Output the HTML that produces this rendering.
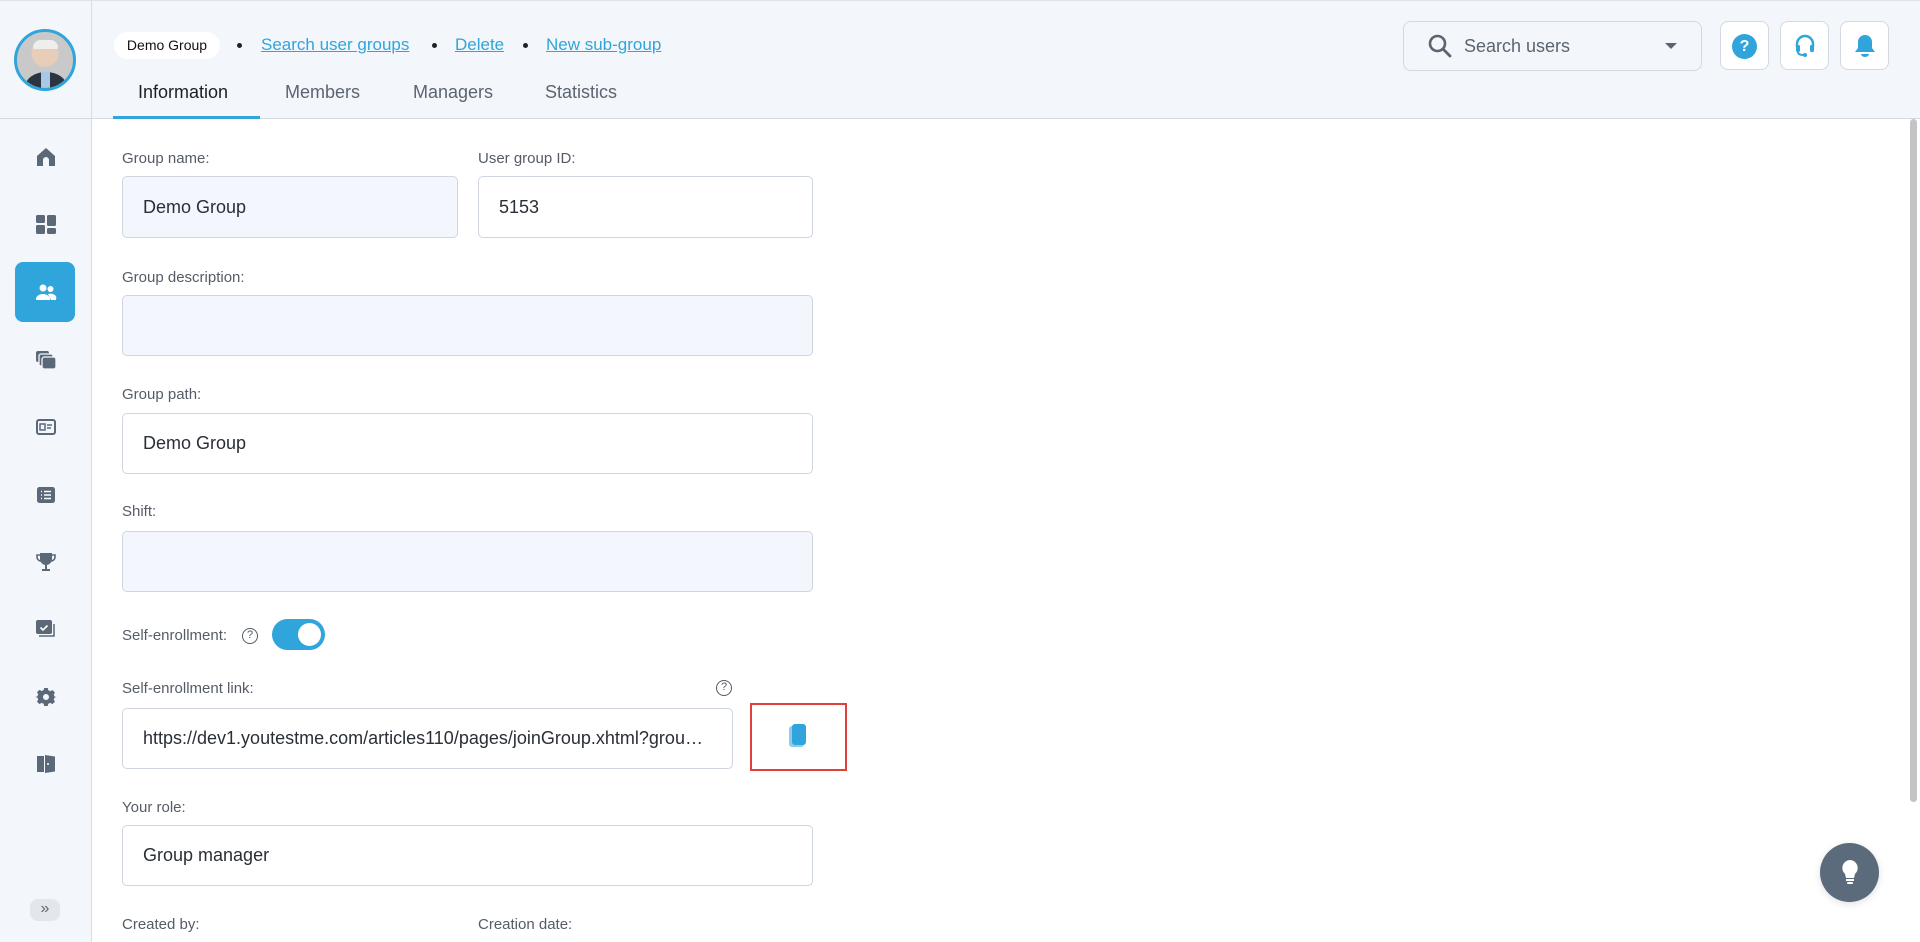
<!DOCTYPE html>
<html><head><meta charset="utf-8"><style>
*{box-sizing:border-box;margin:0;padding:0}
body{width:1920px;height:942px;overflow:hidden;background:#fff;font-family:"Liberation Sans",sans-serif;position:relative;color:#222}
.abs{position:absolute}
#side{left:0;top:0;width:92px;height:942px;background:#f3f7fc;border-right:1px solid #d8dee6}
#head{left:92px;top:0;width:1828px;height:119px;background:#f3f7fc;border-bottom:1px solid #d3d9e1;border-top:1px solid #dde3ea}
.sideTop{left:0;top:0;width:92px;height:119px;border-bottom:1px solid #d3d9e1;border-top:1px solid #dde3ea}
.ic{position:absolute;left:34px;width:24px;height:24px}
.lbl{position:absolute;font-size:15px;color:#555c66}
.inp{position:absolute;border:1px solid #cfd6df;border-radius:5px;font-size:18px;color:#2a2f36;padding-left:20px;display:flex;align-items:center}
.gray{background:#f3f6fc}
.link{position:absolute;top:35px;font-size:17px;color:#2fa5dc;text-decoration:underline}
.dot{position:absolute;top:43px;width:5px;height:5px;border-radius:50%;background:#222}
.tab{position:absolute;top:82px;font-size:18px;color:#5b6470}
.btn{position:absolute;top:21px;width:49px;height:49px;border:1px solid #d3d9e1;border-radius:8px;background:#fff}
.q{position:absolute;width:16px;height:16px;border:1.5px solid #555c66;border-radius:50%;font-size:11px;text-align:center;line-height:13px;color:#555c66}
</style></head><body>
<div id="side" class="abs"></div>
<div class="abs sideTop"></div>
<div id="head" class="abs"></div>
<!-- avatar -->
<div class="abs" style="left:14px;top:29px;width:62px;height:62px;border-radius:50%;border:3px solid #2fa5dc;background:radial-gradient(circle at 50% 38%,#e8cdb9 0 13px,#c9c9c9 14px 100%);overflow:hidden">
<div style="position:absolute;left:8px;top:40px;width:42px;height:30px;border-radius:50% 50% 0 0;background:#2c3442"></div>
<div style="position:absolute;left:24px;top:40px;width:9px;height:20px;background:#a9c8e8"></div>
<div style="position:absolute;left:16px;top:8px;width:25px;height:9px;border-radius:10px 10px 2px 2px;background:#eee"></div>
</div>
<!-- sidebar icons -->
<div class="abs" style="left:15px;top:262px;width:60px;height:60px;border-radius:8px;background:#2fa5dc"></div>
<svg class="ic" style="top:145px" viewBox="0 0 24 24"><path d="M3 11 12 3l9 8v10h-6v-6a3 3 0 0 0-6 0v6H3z" fill="#5b6878"/></svg>
<svg class="ic" style="top:212px" viewBox="0 0 24 24"><rect x="2" y="3" width="9" height="8" rx="1.5" fill="#5b6878"/><rect x="13" y="3" width="9" height="11" rx="1.5" fill="#5b6878"/><rect x="2" y="13" width="9" height="9" rx="1.5" fill="#5b6878"/><rect x="13" y="16" width="9" height="6" rx="1.5" fill="#5b6878"/></svg>
<svg class="ic" style="top:280px" viewBox="0 0 24 24"><circle cx="9" cy="8" r="3.5" fill="#fff"/><circle cx="16.5" cy="9" r="3" fill="#fff"/><path d="M2 19a7 5 0 0 1 14 0v1H2z" fill="#fff"/><path d="M14 14a6 4 0 0 1 8 5v1h-5z" fill="#fff"/></svg>
<svg class="ic" style="top:347px" viewBox="0 0 24 24"><rect x="2" y="4" width="13" height="11" rx="2" fill="#5b6878"/><rect x="5" y="7" width="14" height="12" rx="2" fill="#5b6878" stroke="#f3f7fc" stroke-width="1.3"/><rect x="8" y="10" width="14" height="12" rx="2.5" fill="#5b6878" stroke="#f3f7fc" stroke-width="1.3"/></svg>
<svg class="ic" style="top:415px" viewBox="0 0 24 24"><rect x="3" y="5" width="18" height="14" rx="2" fill="none" stroke="#5b6878" stroke-width="2"/><rect x="6" y="9" width="5" height="6" fill="none" stroke="#5b6878" stroke-width="1.5"/><path d="M13 10h5M13 13h4" stroke="#5b6878" stroke-width="1.5"/></svg>
<svg class="ic" style="top:483px" viewBox="0 0 24 24"><rect x="3" y="4" width="18" height="16" rx="2.5" fill="#5b6878"/><path d="M7 8.5h1M7 12h1M7 15.5h1M10 8.5h7M10 12h7M10 15.5h7" stroke="#fff" stroke-width="1.6"/></svg>
<svg class="ic" style="top:550px" viewBox="0 0 24 24"><path d="M6 3h12v6a6 6 0 0 1-12 0zM11 15h2v4h3v2H8v-2h3z" fill="#5b6878"/><path d="M6 5H3v2a4 4 0 0 0 4 4M18 5h3v2a4 4 0 0 1-4 4" fill="none" stroke="#5b6878" stroke-width="1.6"/></svg>
<svg class="ic" style="top:617px" viewBox="0 0 24 24"><path d="M5 19h15V7" fill="none" stroke="#5b6878" stroke-width="1.5"/><rect x="2" y="3" width="16" height="14" rx="2" fill="#5b6878"/><path d="M6.5 10.5l2.5 2.5 4.5-4.5" fill="none" stroke="#fff" stroke-width="1.6"/></svg>
<svg class="ic" style="top:685px" viewBox="0 0 24 24"><path d="M10 2h4l.6 2.6 2.3 1 2.3-1.4 2.8 2.8-1.4 2.3 1 2.3L24 12v0l-2.4.6-1 2.3 1.4 2.3-2.8 2.8-2.3-1.4-2.3 1L14 22h-4l-.6-2.4-2.3-1-2.3 1.4-2.8-2.8 1.4-2.3-1-2.3L0 12l2.4-.6 1-2.3L2 6.8 4.8 4l2.3 1.4 2.3-1z" fill="#5b6878" transform="scale(.9) translate(1.3 1.3)"/><circle cx="12" cy="12" r="3" fill="#f3f7fc"/></svg>
<svg class="ic" style="top:752px" viewBox="0 0 24 24"><rect x="3" y="4" width="7" height="16" fill="#5b6878"/><path d="M11 3l10 1.5v15L11 21z" fill="#5b6878"/><circle cx="14" cy="12" r="1" fill="#fff"/></svg>
<div class="abs" style="left:30px;top:899px;width:30px;height:22px;border-radius:8px;background:#e3e7ec;color:#5b6878;font-size:16px;text-align:center;line-height:20px">»</div>
<!-- header -->
<div class="abs" style="left:114px;top:32px;width:106px;height:27px;border-radius:14px;background:#fff;font-size:14px;line-height:27px;text-align:center;color:#111">Demo Group</div>
<div class="dot" style="left:237px"></div><span class="link" style="left:261px">Search user groups</span>
<div class="dot" style="left:432px"></div><span class="link" style="left:455px">Delete</span>
<div class="dot" style="left:523px"></div><span class="link" style="left:546px">New sub-group</span>
<span class="tab" style="left:138px;color:#1b2027">Information</span>
<span class="tab" style="left:285px">Members</span>
<span class="tab" style="left:413px">Managers</span>
<span class="tab" style="left:545px">Statistics</span>
<div class="abs" style="left:113px;top:116px;width:147px;height:3px;background:#2fa5dc"></div>
<div class="abs" style="left:1403px;top:21px;width:299px;height:50px;border:1px solid #d3d9e1;border-radius:8px;background:#f3f7fc"></div>
<svg class="abs" style="left:1427px;top:33px" width="26" height="26" viewBox="0 0 26 26"><circle cx="10.5" cy="10.5" r="7.5" fill="none" stroke="#5b6470" stroke-width="2.6"/><path d="M16 16l7 7" stroke="#5b6470" stroke-width="2.8" stroke-linecap="round"/></svg>
<span class="abs" style="left:1464px;top:36px;font-size:18px;color:#5b6470">Search users</span>
<div class="abs" style="left:1665px;top:43px;border-left:6px solid transparent;border-right:6px solid transparent;border-top:6px solid #5b6470"></div>
<div class="btn" style="left:1720px"></div><div class="btn" style="left:1780px"></div><div class="btn" style="left:1840px"></div>
<div class="abs" style="left:1732px;top:34px;width:25px;height:25px;border-radius:50%;background:#2fa5dc;color:#fff;font-weight:bold;font-size:16px;text-align:center;line-height:25px">?</div>
<svg class="abs" style="left:1792px;top:33px" width="26" height="26" viewBox="0 0 26 26"><path d="M5 14v-3a8 8 0 0 1 16 0v3" fill="none" stroke="#2fa5dc" stroke-width="2.4"/><rect x="4" y="12" width="4" height="7" rx="1.5" fill="#2fa5dc"/><rect x="18" y="12" width="4" height="7" rx="1.5" fill="#2fa5dc"/><path d="M6 19q0 3 6 3" fill="none" stroke="#2fa5dc" stroke-width="2"/><circle cx="13" cy="22" r="2" fill="#2fa5dc"/></svg>
<svg class="abs" style="left:1851px;top:32px" width="28" height="28" viewBox="0 0 28 28"><path d="M14 3a7 7 0 0 1 7 7v6l3 4H4l3-4v-6a7 7 0 0 1 7-7z" fill="#2fa5dc"/><path d="M10 22a4 3 0 0 0 8 0z" fill="#2fa5dc"/></svg>
<!-- form -->
<span class="lbl" style="left:122px;top:150px">Group name:</span>
<span class="lbl" style="left:478px;top:150px">User group ID:</span>
<div class="inp gray" style="left:122px;top:176px;width:336px;height:62px">Demo Group</div>
<div class="inp" style="left:478px;top:176px;width:335px;height:62px">5153</div>
<span class="lbl" style="left:122px;top:269px">Group description:</span>
<div class="inp gray" style="left:122px;top:295px;width:691px;height:61px"></div>
<span class="lbl" style="left:122px;top:386px">Group path:</span>
<div class="inp" style="left:122px;top:413px;width:691px;height:61px">Demo Group</div>
<span class="lbl" style="left:122px;top:503px">Shift:</span>
<div class="inp gray" style="left:122px;top:531px;width:691px;height:61px"></div>
<span class="lbl" style="left:122px;top:627px">Self-enrollment:</span>
<div class="q" style="left:242px;top:628px">?</div>
<div class="abs" style="left:272px;top:619px;width:53px;height:31px;border-radius:16px;background:#2fa5dc"><div style="position:absolute;right:4px;top:4px;width:23px;height:23px;border-radius:50%;background:#fff"></div></div>
<span class="lbl" style="left:122px;top:680px">Self-enrollment link:</span>
<div class="q" style="left:716px;top:680px">?</div>
<div class="inp" style="left:122px;top:708px;width:611px;height:61px;white-space:nowrap;overflow:hidden">https://dev1.youtestme.com/articles110/pages/joinGroup.xhtml?grou…</div>
<div class="abs" style="left:750px;top:703px;width:97px;height:68px;border:2.5px solid #e2403a"></div>
<svg class="abs" style="left:786px;top:721px" width="24" height="30" viewBox="0 0 24 30"><rect x="3" y="5" width="15" height="21" rx="3" fill="#8ccbec"/><rect x="6" y="3" width="14" height="21" rx="3" fill="#2fa5dc"/></svg>
<span class="lbl" style="left:122px;top:799px">Your role:</span>
<div class="inp" style="left:122px;top:825px;width:691px;height:61px">Group manager</div>
<span class="lbl" style="left:122px;top:916px">Created by:</span>
<span class="lbl" style="left:478px;top:916px">Creation date:</span>
<!-- scrollbar -->
<div class="abs" style="left:1910px;top:119px;width:7px;height:683px;border-radius:4px;background:#c4c4c4"></div>
<!-- fab -->
<div class="abs" style="left:1820px;top:843px;width:59px;height:59px;border-radius:50%;background:#5b6b7c;box-shadow:0 2px 8px rgba(0,0,0,.12)"></div>
<svg class="abs" style="left:1838px;top:858px" width="24" height="30" viewBox="0 0 24 30"><path d="M12 2a8 8 0 0 1 5 14l-1 4H8l-1-4A8 8 0 0 1 12 2z" fill="#fff"/><rect x="8" y="21" width="8" height="2" fill="#fff"/><rect x="9" y="24" width="6" height="2" rx="1" fill="#fff"/></svg>
</body></html>
